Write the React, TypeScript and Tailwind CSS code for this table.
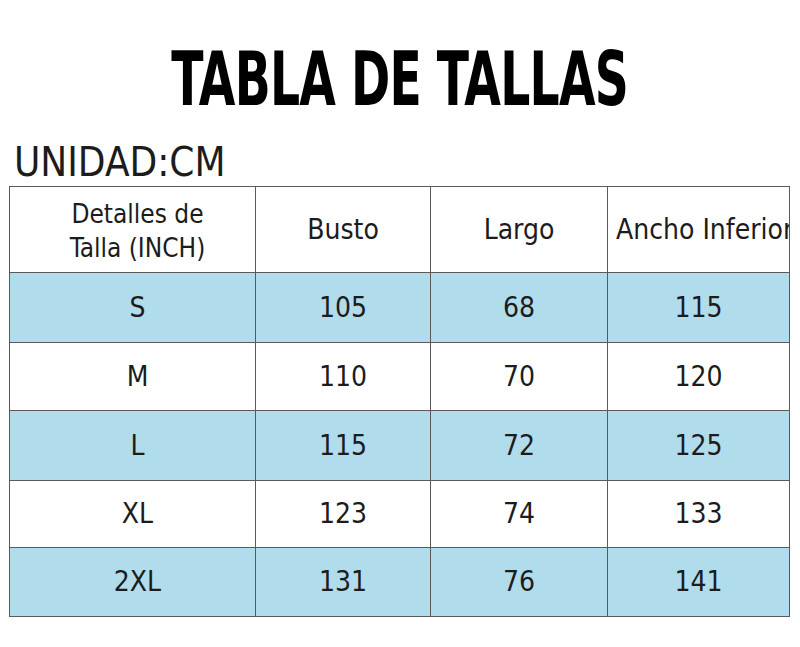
const rows = [
  { size: "S", busto: "105", largo: "68", ancho: "115", blue: true },
  { size: "M", busto: "110", largo: "70", ancho: "120", blue: false },
  { size: "L", busto: "115", largo: "72", ancho: "125", blue: true },
  { size: "XL", busto: "123", largo: "74", ancho: "133", blue: false },
  { size: "2XL", busto: "131", largo: "76", ancho: "141", blue: true },
];

const heights = ["h-[70px]", "h-[68px]", "h-[70px]", "h-[67px]", "h-[69px]"];

export default function App() {
  return (
    <div className="w-[800px] h-[647px] bg-white overflow-hidden font-['DejaVu_Sans_Condensed',sans-serif] text-[#1c1c1c]">
      <div className="h-[140px] flex justify-center items-start pt-[39px]">
        <h1 className="font-bold text-[74px] leading-[80px] tracking-[-1px] scale-x-[0.71] text-black whitespace-nowrap">
          TABLA DE TALLAS
        </h1>
      </div>
      <div className="pl-[14px] h-[48px] text-[40px] leading-[48px] -mt-[2px]">
        UNIDAD:CM
      </div>
      <div className="ml-[9px] w-[781px] border border-[#5a5a5a]">
        <div className="grid grid-cols-[246px_175px_177px_1fr] h-[85px]">
          <div className="flex flex-col items-center justify-center pl-[10px] pt-[2px] text-[26px] leading-[34px] border-r border-[#5a5a5a]">
            <span>Detalles de</span>
            <span>Talla (INCH)</span>
          </div>
          <div className="flex items-center justify-center text-[28px] border-r border-[#5a5a5a]">Busto</div>
          <div className="flex items-center justify-center text-[28px] border-r border-[#5a5a5a]">Largo</div>
          <div className="flex items-center pl-[8px] text-[28px] overflow-hidden whitespace-nowrap">Ancho Inferior</div>
        </div>
        {rows.map((r, i) => (
          <div
            key={r.size}
            className={`grid grid-cols-[246px_175px_177px_1fr] border-t border-[#5a5a5a] text-[28px] ${heights[i]} ${r.blue ? "bg-[#b1dcec]" : "bg-white"}`}
          >
            <div className="flex items-center justify-center pl-[10px] border-r border-[#5a5a5a]">{r.size}</div>
            <div className="flex items-center justify-center border-r border-[#5a5a5a]">{r.busto}</div>
            <div className="flex items-center justify-center border-r border-[#5a5a5a]">{r.largo}</div>
            <div className="flex items-center justify-center">{r.ancho}</div>
          </div>
        ))}
      </div>
    </div>
  );
}
